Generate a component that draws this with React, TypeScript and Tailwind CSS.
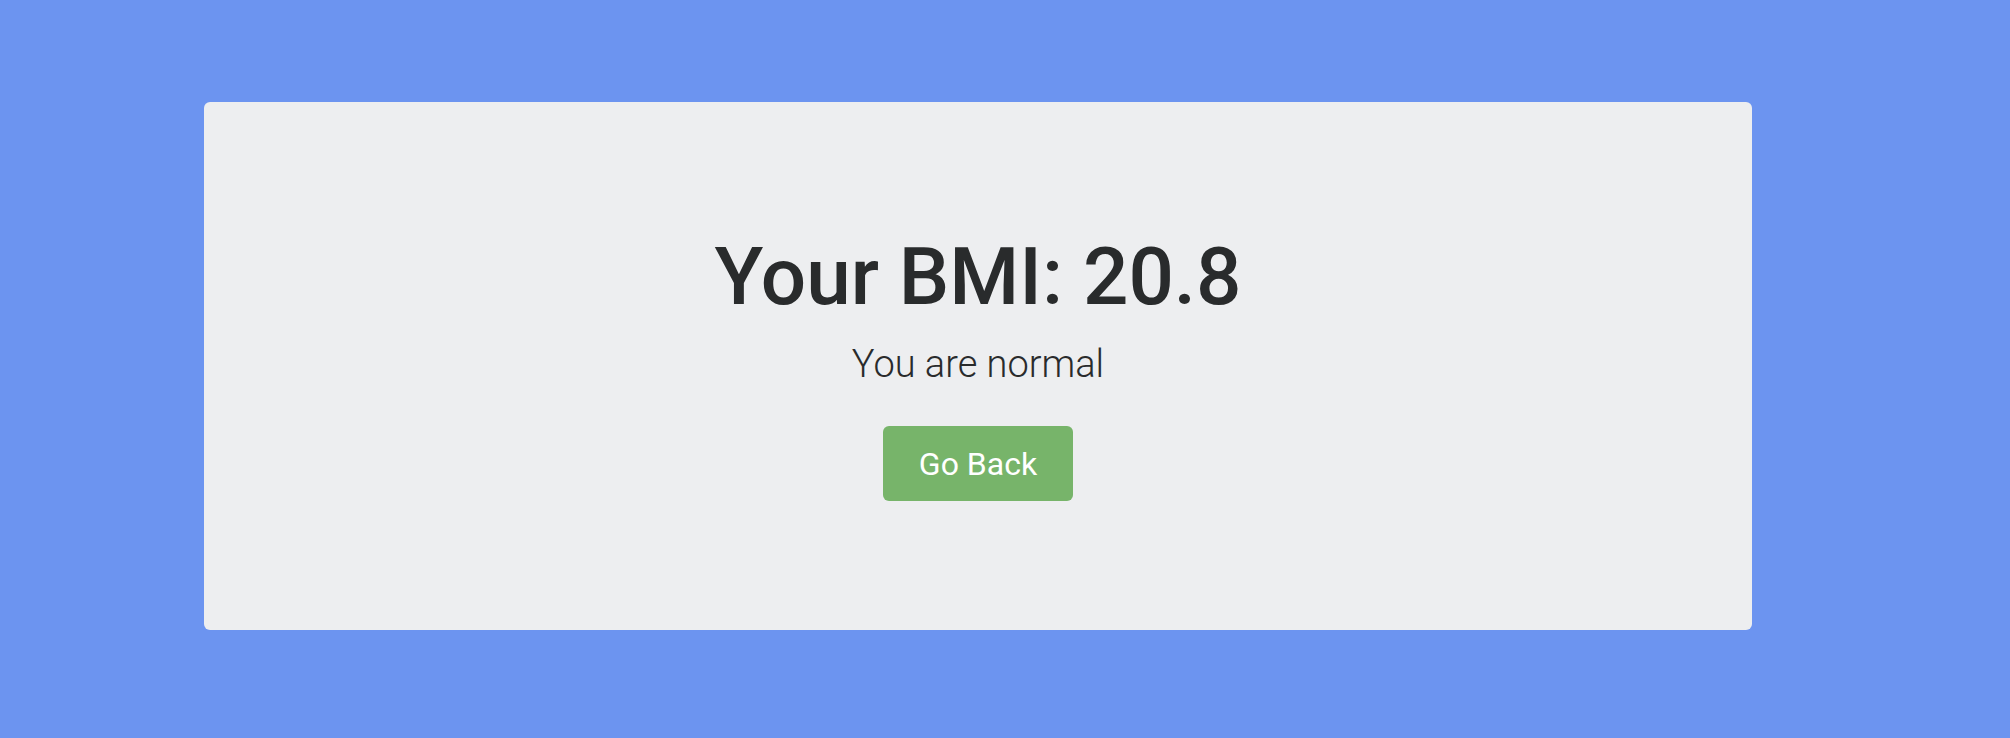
export default function App() {
  return (
    <div className="h-[738px] w-full bg-[#6c94f0] pt-[102px] font-['Roboto',sans-serif]">
      <div className="ml-[204px] w-[1548px] h-[528px] rounded-[6px] bg-[#edeef0] pt-[128px] flex flex-col items-center text-[#292b2c]">
        <h1 className="text-[80px] leading-[94px] font-medium">Your BMI: 20.8</h1>
        <p className="mt-[12px] text-[38px] leading-[56px] font-light">You are normal</p>
        <button className="mt-[34px] h-[75px] w-[190px] rounded-[6px] bg-[#77b46a] text-[32px] text-white">
          Go Back
        </button>
      </div>
    </div>
  );
}
